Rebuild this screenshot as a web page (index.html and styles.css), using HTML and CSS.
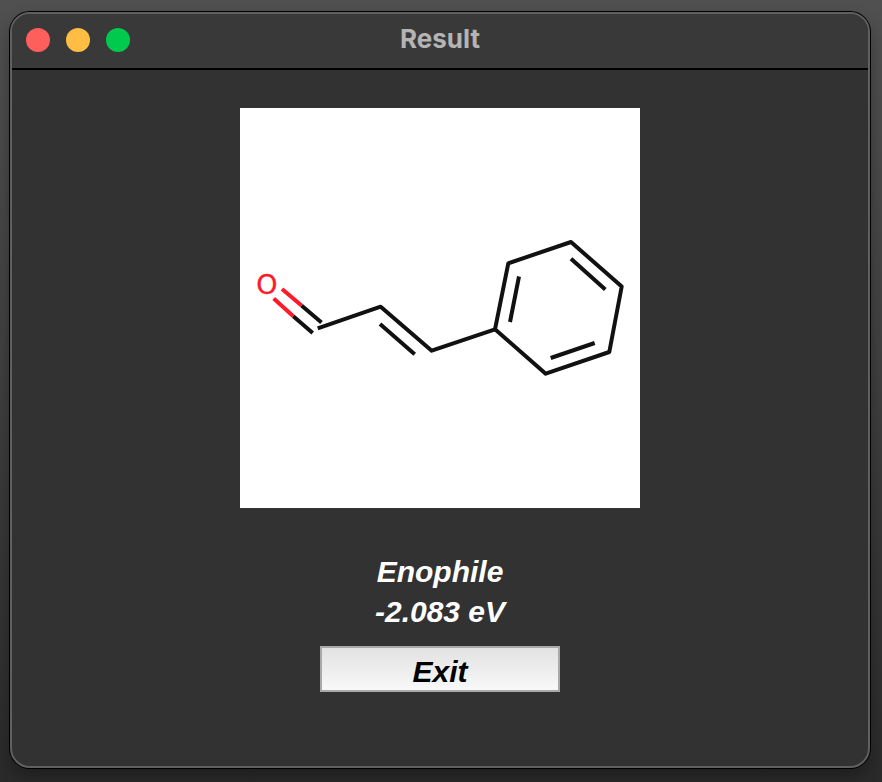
FILE: index.html
```html
<!DOCTYPE html>
<html lang="en">
<head>
<meta charset="utf-8">
<title>Result</title>
<link rel="stylesheet" href="styles.css">
</head>
<body>
<main class="window">
  <header class="titlebar">
    <div class="controls">
      <button class="dot close" type="button" aria-label="Close"></button>
      <button class="dot minimize" type="button" aria-label="Minimize"></button>
      <button class="dot zoom" type="button" aria-label="Zoom"></button>
    </div>
    <h1 class="title">Result</h1>
  </header>
  <section class="content">
    <svg class="molecule" viewBox="240 108 400 400" role="img" aria-label="Cinnamaldehyde structure">
      <g class="bonds">
        <path d="M317.7 328.3L380.7 306.7L431.7 350.7L495 329.3"/>
        <path d="M495 329.3L508.3 263.3L571 242L621.7 286.5L609.3 352L545.7 373.7Z"/>
        <path d="M301.5 305.5L321.5 322.5M293.3 316.3L312.7 333"/>
        <path d="M380 324L414.7 354.3"/>
        <path d="M519 276.5L510 322M571 258.7L605.3 289.5M550.7 358L594.7 343"/>
      </g>
      <path class="oxygen-bond" d="M282 289L301.5 305.5M273.7 298.5L293.3 316.3"/>
      <text class="atom" x="267" y="294">O</text>
    </svg>
    <p class="result">Enophile<br>-2.083 eV</p>
    <button class="exit" type="button">Exit</button>
  </section>
</main>
</body>
</html>
```
FILE: styles.css
```css
* {
  box-sizing: border-box;
}

body {
  display: flex;
  min-height: 100vh;
  margin: 0;
  padding: 12px 12px 14px 10px;
  background: linear-gradient(#505050, #424242 40%, #2a2a2a);
  font-family: "Liberation Sans", Arial, sans-serif;
}

.window {
  flex: 1;
  display: flex;
  flex-direction: column;
  overflow: hidden;
  border: 2px solid #606060;
  border-radius: 20px;
  background: #323232;
  box-shadow: 0 0 0 1px #000, 0 8px 16px rgba(0, 0, 0, 0.3);
}

.titlebar {
  display: grid;
  grid-template-columns: 1fr auto 1fr;
  align-items: center;
  height: 56px;
  padding: 0 14px 2px;
  border-bottom: 2px solid #000;
  background: #393939;
}

.controls {
  display: flex;
  gap: 16px;
}

.dot {
  width: 24px;
  height: 24px;
  padding: 0;
  border: 0;
  border-radius: 50%;
}

.close {
  background: #ff5f5c;
}

.minimize {
  background: #ffbd44;
}

.zoom {
  background: #00ca4e;
}

.title {
  margin: 0;
  padding-bottom: 2px;
  color: #b4b4b4;
  font: 700 26px/32px Inter, sans-serif;
}

.content {
  display: flex;
  flex-direction: column;
  align-items: center;
  padding: 38px 16px;
}

.molecule {
  width: 400px;
  max-width: 100%;
  background: #fff;
}

.bonds,
.oxygen-bond {
  fill: none;
  stroke: #111;
  stroke-width: 4;
  stroke-linejoin: round;
}

.oxygen-bond {
  stroke: #ff1a2b;
}

.atom {
  fill: #ff1a2b;
  stroke: #ff1a2b;
  stroke-width: 0.3;
  font: 27px "DejaVu Sans", sans-serif;
  text-anchor: middle;
}

.result {
  margin: 44px 0 14px;
  color: #fff;
  font-size: 30px;
  font-style: italic;
  font-weight: 700;
  line-height: 40px;
  text-align: center;
}

.exit {
  width: 240px;
  height: 46px;
  padding: 6px 0 0;
  border: 2px solid #a9a9a9;
  background: linear-gradient(#e2e2e2, #f8f8f8);
  color: #000;
  font: italic 700 30px/36px "Liberation Sans", Arial, sans-serif;
}
```
